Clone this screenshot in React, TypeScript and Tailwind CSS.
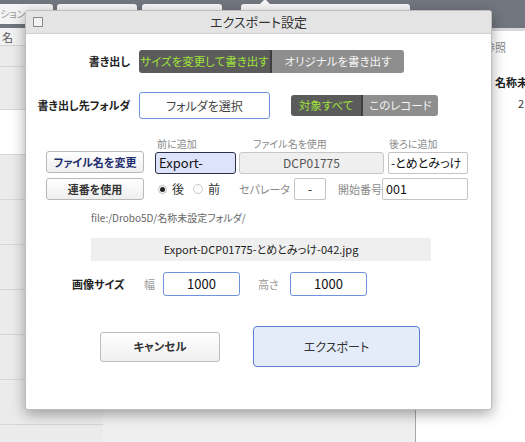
import React from "react";

const FONT = "font-[family-name:'Noto_Sans_CJK_JP','Noto_Sans',sans-serif] [font-feature-settings:'palt']";

function Background() {
  const rows = [21, 43, 45, 45, 45, 45, 45, 45, 45, 45];
  return (
    <div className={`w-[525px] h-[442px] flex flex-col bg-[#efefef] overflow-hidden ${FONT}`}>
      <div className="h-[28px] bg-[#72767e] flex items-start pt-[4px] gap-[4px] shrink-0">
        <div className="w-[53px] h-[20px] bg-[#f4f4f4] rounded-r-[3px] text-[10px] text-[#999] leading-[20px] overflow-hidden whitespace-nowrap">ション</div>
        <div className="w-[80px] h-[20px] bg-[#f6f6f6] rounded-[3px]" />
        <div className="w-[80px] h-[20px] bg-[#f6f6f6] rounded-[3px] ml-[1px]" />
        <div className="relative w-[169px] h-[20px] bg-[#f6f6f6] rounded-[3px] ml-[15px]">
          <div className="absolute left-[18px] -top-[5px] w-0 h-0 border-l-[6px] border-r-[6px] border-b-[6px] border-l-transparent border-r-transparent border-b-[#f6f6f6]" />
        </div>
      </div>
      <div className="flex flex-1">
        <div className="w-[103px] flex flex-col bg-[#e9e9e9]">
          <div className="h-[18px] bg-[#f2f2f2] border-b border-[#d4d4d4] text-[11px] text-[#555] leading-[18px] pl-[2px]">名</div>
          {rows.map((h, i) => (
            <div key={i} className={`border-b border-[#d6d6d6] ${i === 2 ? "bg-white" : "bg-[#ebebeb]"}`} style={{ height: h }} />
          ))}
        </div>
        <div className="flex-1 bg-[#efefef]" />
        <div className="w-[1px] bg-[#a8a8a8]" />
        <div className="w-[109px] bg-white flex flex-col border-t-[3px] border-[#d9d9d9] overflow-hidden">
          <div className="pl-[68px] pt-[9px] text-[11px] text-[#888] leading-[14px] whitespace-nowrap">参照</div>
          <div className="pl-[79px] pt-[21px] text-[11px] font-bold text-[#222] leading-[14px] whitespace-nowrap">名称未設定</div>
          <div className="pl-[102px] pt-[7px] text-[11px] text-[#333] leading-[14px]">2</div>
          <div className="flex-1" />
          <div className="border-t border-[#e2e2e2] h-[17px] text-[9px] text-[#777] pl-[66px] leading-[14px] whitespace-nowrap">ID&nbsp;&nbsp;76</div>
        </div>
      </div>
    </div>
  );
}

function Seg({ a, b, wa, wb, h }: { a: string; b: string; wa: number; wb: number; h: number }) {
  return (
    <div className="flex rounded-[3px] overflow-hidden text-[11.5px] whitespace-nowrap" style={{ height: h }}>
      <div className="bg-[#5b5b5b] text-[#9ee23a] flex items-center justify-center border-r-2 border-[#3e3e3e]" style={{ width: wa }}>{a}</div>
      <div className="bg-[#8e8e8e] text-[#f4f4f4] flex items-center justify-center" style={{ width: wb }}>{b}</div>
    </div>
  );
}

function Dialog() {
  return (
    <div className={`absolute left-[25px] top-[10px] w-[467px] h-[400px] bg-white border border-[#bdbdbd] rounded-[3px] shadow-[0_4px_14px_rgba(0,0,0,0.35)] flex flex-col overflow-hidden ${FONT}`}>
      <div className="h-[23px] bg-[#e4e4e4] border-b border-[#d0d0d0] flex items-center relative shrink-0">
        <div className="absolute left-[7px] top-[6px] w-[10px] h-[10px] border border-[#8a8a8a] bg-[#f2f2f2]" />
        <div className="w-full text-center text-[13px] text-[#333]">エクスポート設定</div>
      </div>

      <div className="flex flex-col">
        <div className="flex items-center mt-[16px] h-[23px]">
          <div className="w-[104px] text-right text-[11px] font-bold text-[#222]">書き出し</div>
          <div className="ml-[9px]"><Seg a="サイズを変更して書き出す" b="オリジナルを書き出す" wa={133} wb={132} h={23} /></div>
        </div>
        <div className="flex items-center mt-[19px] h-[27px]">
          <div className="w-[104px] text-right text-[11px] font-bold text-[#222] whitespace-nowrap">書き出し先フォルダ</div>
          <div className="ml-[9px] w-[131px] h-[27px] border border-[#6f93e0] rounded-[3px] bg-white flex items-center justify-center text-[12px] text-[#444]">フォルダを選択</div>
          <div className="ml-[21px]"><Seg a="対象すべて" b="このレコード" wa={72} wb={75} h={21} /></div>
        </div>

        <div className="flex mt-[18px]">
          <div className="w-[98px] ml-[20px] flex flex-col gap-[5px] mt-[14px]">
            <div className="h-[22px] border border-[#b9b9b9] rounded-[3px] bg-gradient-to-b from-white to-[#efefef] flex items-center justify-center text-[11px] font-bold text-[#1e2d6e] whitespace-nowrap">ファイル名を変更</div>
            <div className="h-[22px] border border-[#b9b9b9] rounded-[3px] bg-gradient-to-b from-white to-[#efefef] flex items-center justify-center text-[11px] font-bold text-[#333]">連番を使用</div>
          </div>
          <div className="ml-[11px] flex flex-col">
            <div className="flex text-[10px] text-[#8a8a8a] h-[14px] leading-[14px] whitespace-nowrap">
              <div className="w-[84px] pl-[2px]">前に追加</div>
              <div className="w-[149px] pl-[14px]">ファイル名を使用</div>
              <div className="pl-[1px]">後ろに追加</div>
            </div>
            <div className="flex mt-[1px] h-[22px] items-stretch">
              <div className="w-[81px] border-[1.5px] border-[#2b3048] rounded-[3px] bg-[#dde3fb] text-[13px] text-[#111] pl-[3px] flex items-center">Export-</div>
              <div className="ml-[3px] w-[145px] border border-[#c6c6c6] rounded-[3px] bg-[#efefef] text-[12px] text-[#555] flex items-center justify-center">DCP01775</div>
              <div className="ml-[4px] w-[80px] border border-[#c4c4c4] rounded-[2px] bg-white text-[12px] text-[#111] pl-[2px] flex items-center whitespace-nowrap overflow-hidden">-とめとみっけ</div>
            </div>
            <div className="flex mt-[4px] h-[22px] items-center whitespace-nowrap">
              <div className="w-[84px] flex items-center text-[12px] text-[#333] pl-[3px]">
                <span className="w-[9px] h-[9px] rounded-full border border-[#bbb] flex items-center justify-center"><span className="w-[5px] h-[5px] rounded-full bg-[#222]" /></span>
                <span className="ml-[5px]">後</span>
                <span className="ml-[9px] w-[10px] h-[10px] rounded-full border border-[#c8c8c8] bg-white" />
                <span className="ml-[5px]">前</span>
              </div>
              <div className="w-[55px] text-[11px] text-[#8a8a8a]">セパレータ</div>
              <div className="w-[32px] h-[22px] border border-[#c4c4c4] rounded-[2px] bg-white text-[12px] flex items-center justify-center text-[#222]">-</div>
              <div className="ml-[12px] w-[44px] text-[11px] text-[#8a8a8a]">開始番号</div>
              <div className="w-[86px] h-[22px] border border-[#c4c4c4] rounded-[2px] bg-white text-[12.5px] pl-[3px] flex items-center text-[#111]">001</div>
            </div>
          </div>
        </div>

        <div className="ml-[65px] mt-[10px] text-[10px] text-[#666] h-[16px] leading-[16px] whitespace-nowrap">file:/Drobo5D/名称未設定フォルダ/</div>
        <div className="ml-[65px] mt-[12px] w-[340px] h-[23px] bg-[#efefef] flex items-center justify-center text-[11px] text-[#222] whitespace-nowrap">Export-DCP01775-とめとみっけ-042.jpg</div>

        <div className="flex items-center mt-[11px] h-[24px] whitespace-nowrap">
          <div className="ml-[46px] w-[72px] text-[11px] font-bold text-[#222]">画像サイズ</div>
          <div className="w-[19px] text-[11px] text-[#999]">幅</div>
          <div className="w-[77px] h-[24px] border border-[#6f93e0] rounded-[3px] flex items-center justify-center text-[13px] text-[#111]">1000</div>
          <div className="ml-[18px] w-[32px] text-[11px] text-[#999]">高さ</div>
          <div className="w-[77px] h-[24px] border border-[#6f93e0] rounded-[3px] flex items-center justify-center text-[13px] text-[#111]">1000</div>
        </div>

        <div className="flex items-center mt-[30px] whitespace-nowrap">
          <div className="ml-[74px] w-[120px] h-[30px] border border-[#bdbdbd] rounded-[3px] bg-gradient-to-b from-white to-[#f0f0f0] flex items-center justify-center text-[11.5px] font-bold text-[#333]">キャンセル</div>
          <div className="ml-[33px] w-[167px] h-[41px] border border-[#5d7fd0] rounded-[4px] bg-[#e4ebf9] flex items-center justify-center text-[12px] text-[#333]">エクスポート</div>
        </div>
      </div>
    </div>
  );
}

export default function App() {
  return (
    <div className="relative w-[525px] h-[442px] overflow-hidden">
      <Background />
      <Dialog />
    </div>
  );
}
